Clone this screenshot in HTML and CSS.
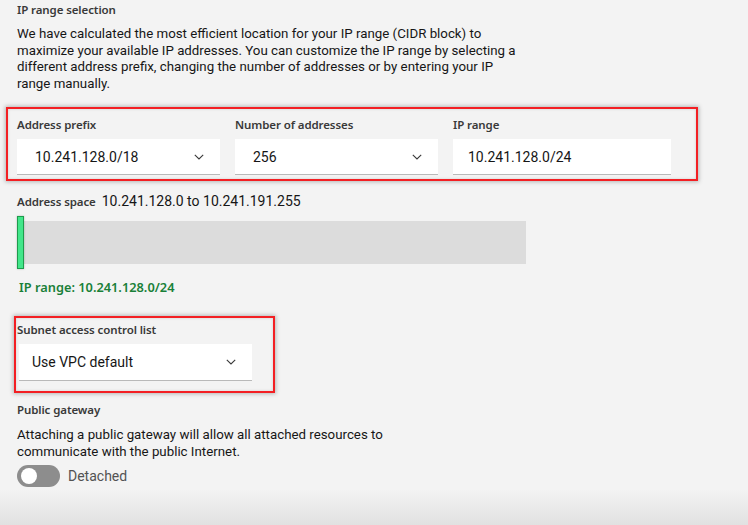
FILE: index.html
```html
<!DOCTYPE html>
<html lang="en">
<head>
<meta charset="utf-8">
<title>IP range selection</title>
<link rel="stylesheet" href="styles.css">
</head>
<body>
<main class="page">
  <h3 class="label title">IP range selection</h3>
  <p class="desc">We have calculated the most efficient location for your IP range (CIDR block) to<br>maximize your available IP addresses. You can customize the IP range by selecting a<br>different address prefix, changing the number of addresses or by entering your IP<br>range manually.</p>

  <section class="highlight range-box">
    <div class="field w203">
      <span class="label">Address prefix</span>
      <div class="control select"><span>10.241.128.0/18</span>
        <svg class="chev" width="10" height="6" viewBox="0 0 10 6"><path d="M0.8 0.8 L5 5 L9.2 0.8" fill="none" stroke="#393939" stroke-width="1.1"/></svg>
      </div>
    </div>
    <div class="field w203">
      <span class="label">Number of addresses</span>
      <div class="control select"><span>256</span>
        <svg class="chev" width="10" height="6" viewBox="0 0 10 6"><path d="M0.8 0.8 L5 5 L9.2 0.8" fill="none" stroke="#393939" stroke-width="1.1"/></svg>
      </div>
    </div>
    <div class="field w218">
      <span class="label">IP range</span>
      <div class="control input"><span>10.241.128.0/24</span></div>
    </div>
  </section>

  <div class="space-row"><span class="label">Address space</span><span class="space-val">10.241.128.0 to 10.241.191.255</span></div>
  <div class="bar-wrap">
    <div class="bar"></div>
    <div class="marker"></div>
  </div>
  <div class="range-text">IP range: 10.241.128.0/24</div>

  <section class="highlight acl-box">
    <span class="label">Subnet access control list</span>
    <div class="control select acl"><span>Use VPC default</span>
      <svg class="chev" width="10" height="6" viewBox="0 0 10 6"><path d="M0.8 0.8 L5 5 L9.2 0.8" fill="none" stroke="#393939" stroke-width="1.1"/></svg>
    </div>
  </section>

  <h3 class="label gw-title">Public gateway</h3>
  <p class="desc gw-desc">Attaching a public gateway will allow all attached resources to<br>communicate with the public Internet.</p>
  <div class="toggle-row">
    <span class="toggle"><span class="knob"></span></span>
    <span class="toggle-text">Detached</span>
  </div>
</main>
</body>
</html>
```

FILE: styles.css
```css
html, body {
  margin: 0;
  height: 100%;
}
body {
  background: linear-gradient(to bottom, #f3f3f3 0, #f3f3f3 490px, #e1e1e1 525px);
  font-family: Roboto, "Noto Sans", sans-serif;
  color: #161616;
  overflow: hidden;
}
.page {
  padding: 3px 0 0 17px;
  display: flex;
  flex-direction: column;
  align-items: flex-start;
}
.label {
  font-family: "Noto Sans", Roboto, sans-serif;
  font-size: 11.5px;
  font-weight: 600;
  color: #393939;
  margin: 0;
  line-height: 14px;
  letter-spacing: -0.1px;
}
.title { margin: 0; }
.desc {
  font-size: 13.3px;
  line-height: 16.5px;
  margin: 9px 0 0;
  color: #161616;
}
.highlight {
  border: 2px solid #f31f23;
  box-shadow: 0 0 4px 1px rgba(0,0,0,0.25), inset 0 0 3px rgba(0,0,0,0.15);
  box-sizing: border-box;
}
.range-box {
  margin: 15px 0 0 -11px;
  width: 692px;
  height: 74px;
  padding: 9px 0 0 9px;
  display: flex;
  gap: 15px;
}
.field {
  display: flex;
  flex-direction: column;
  gap: 7px;
}
.w203 { width: 203px; }
.w218 { width: 218px; }
.control {
  background: #fff;
  height: 36px;
  border-bottom: 1px solid #b9b9b9;
  box-sizing: border-box;
  display: flex;
  align-items: center;
  justify-content: space-between;
  font-size: 14px;
  color: #161616;
}
.control span { padding-left: 18px; }
.input span { padding-left: 15px; }
.chev { margin-right: 16px; }

.space-row {
  margin-top: 12px;
  display: flex;
  align-items: baseline;
  gap: 6px;
}
.space-val { font-size: 14px; color: #161616; }
.bar-wrap {
  position: relative;
  margin-top: 7px;
  width: 509px;
  height: 53px;
  display: flex;
  align-items: center;
}
.bar {
  width: 509px;
  height: 43px;
  background: #dcdcdc;
}
.marker {
  position: absolute;
  left: 0;
  top: 0;
  width: 7px;
  height: 53px;
  box-sizing: border-box;
  background: #42e68a;
  border: 1.5px solid #1d9c4c;
  box-shadow: 0 0 2px rgba(0,0,0,0.3);
}
.range-text {
  font-family: "Noto Sans", Roboto, sans-serif;
  margin-top: 9px;
  font-size: 12.8px;
  font-weight: 600;
  color: #198038;
  margin-left: 2px;
}
.acl-box {
  margin: 20px 0 0 -3px;
  width: 261px;
  height: 77px;
  padding: 5px 0 0 1px;
  display: flex;
  flex-direction: column;
  gap: 7px;
}
.acl { width: 233px; height: 37px; margin-left: 2px; }
.acl span { padding-left: 13px; }
.acl .chev { margin-right: 16px; }

.gw-title { margin-top: 10px; }
.gw-desc { margin-top: 10px; }
.toggle-row {
  margin-top: 5px;
  display: flex;
  align-items: center;
  gap: 8px;
}
.toggle {
  width: 43px;
  height: 22px;
  border-radius: 11px;
  background: #8d8d8d;
  display: flex;
  align-items: center;
  padding-left: 4px;
  box-sizing: border-box;
}
.knob {
  width: 16px;
  height: 16px;
  border-radius: 50%;
  background: #fff;
}
.toggle-text { font-size: 14px; color: #525252; }
```
